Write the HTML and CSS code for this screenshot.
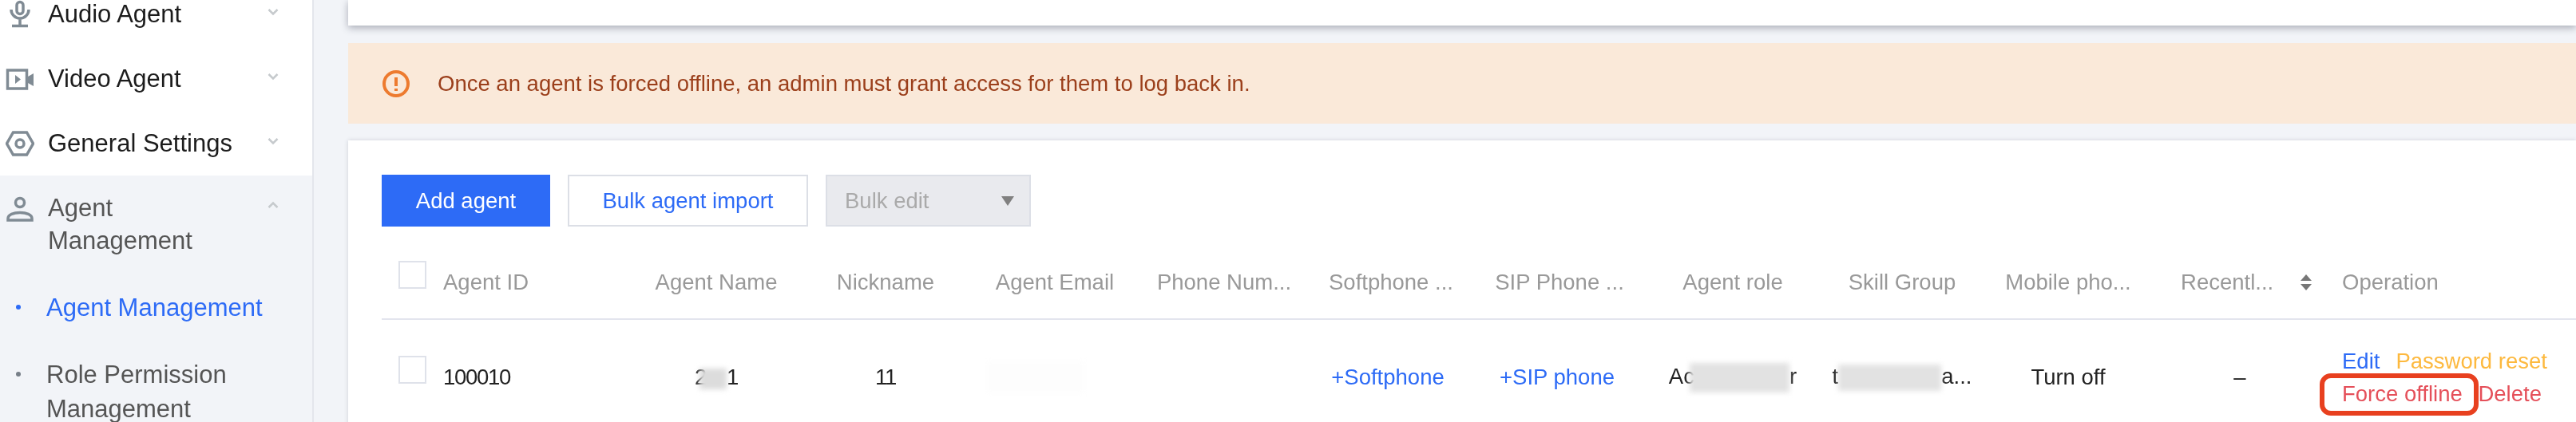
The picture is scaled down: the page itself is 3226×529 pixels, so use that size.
FILE: index.html
```html
<!DOCTYPE html>
<html lang="en">

<head>
   <meta charset="UTF-8">
   <meta name="viewport" content="width=device-width, initial-scale=1.0">
   <title>Agent Management</title>
   <link rel="stylesheet" href="styles.css">
</head>

<body>
   <aside class="sidebar">
      <div class="nav-item">
         <svg class="nav-icon" viewBox="0 0 36 36"><rect x="14" y="2.500" width="8" height="15" rx="4" /><path d="M7 12a11 11 0 0 0 22 0M18 23v9M8 32.500h20" /></svg>
         <span class="nav-label">Audio Agent</span>
         <svg class="chevron" viewBox="0 0 14 10"><path d="M1.500 2l5.500 5.500L12.500 2" /></svg>
      </div>
      <div class="nav-item">
         <svg class="nav-icon" viewBox="0 0 36 36"><rect x="2.500" y="7" width="24" height="23" /><path class="solid" d="M12 13l7 5.500-7 5.500zM28 15l7-4v16l-7-4z" /></svg>
         <span class="nav-label">Video Agent</span>
         <svg class="chevron" viewBox="0 0 14 10"><path d="M1.500 2l5.500 5.500L12.500 2" /></svg>
      </div>
      <div class="nav-item">
         <svg class="nav-icon" viewBox="0 0 36 36"><path d="M1.500 18L9.500 4h17l8 14-8 14h-17z" /><circle cx="18" cy="18" r="5" /></svg>
         <span class="nav-label">General Settings</span>
         <svg class="chevron" viewBox="0 0 14 10"><path d="M1.500 2l5.500 5.500L12.500 2" /></svg>
      </div>

      <div class="nav-group">
         <div class="nav-item nav-item-open">
            <svg class="nav-icon" viewBox="0 0 36 36"><circle cx="18" cy="10" r="5.500" /><path d="M3 32v-2c0-5 7-7.500 15-7.500s15 2.500 15 7.500v2z" /></svg>
            <span class="nav-label">Agent Management</span>
            <svg class="chevron" viewBox="0 0 14 10"><path d="M1.500 8L7 2.500 12.500 8" /></svg>
         </div>
         <div class="sub-item sub-item-active">Agent Management</div>
         <div class="sub-item">Role Permission Management</div>
      </div>
   </aside>

   <main class="content">
      <div class="top-card"></div>

      <div class="alert">
         <svg class="alert-icon" viewBox="0 0 34 34"><circle cx="17" cy="17" r="15" /><path d="M17 9v11M17 23v3" /></svg>
         <span>Once an agent is forced offline, an admin must grant access for them to log back in.</span>
      </div>

      <section class="card">
         <div class="toolbar">
            <button class="btn btn-primary">Add agent</button>
            <button class="btn">Bulk agent import</button>
            <div class="select-disabled">Bulk edit<span class="select-arrow"></span></div>
         </div>

         <table class="agents">
            <colgroup>
               <col class="col-id">
               <col class="col-212">
               <col class="col-212">
               <col class="col-212">
               <col class="col-212">
               <col class="col-soft">
               <col class="col-sip">
               <col class="col-role">
               <col class="col-skill">
               <col class="col-mobile">
               <col class="col-recent">
               <col>
            </colgroup>
            <thead>
               <tr>
                  <th class="cell-left"><div class="id-cell"><span class="checkbox"></span>Agent ID</div></th>
                  <th>Agent Name</th>
                  <th>Nickname</th>
                  <th>Agent Email</th>
                  <th>Phone Num...</th>
                  <th>Softphone ...</th>
                  <th>SIP Phone ...</th>
                  <th>Agent role</th>
                  <th>Skill Group</th>
                  <th>Mobile pho...</th>
                  <th class="cell-recent">Recentl...
                     <svg class="sort-icon" viewBox="0 0 18 20"><path d="M9 0l7 8H2zM9 20l-7-8h14z" /></svg>
                  </th>
                  <th class="cell-op">Operation</th>
               </tr>
            </thead>
            <tbody>
               <tr>
                  <td class="cell-left"><div class="id-cell"><span class="checkbox"></span><span class="digits">100010</span></div></td>
                  <td class="digits">2<span class="mask mask-name"></span>1</td>
                  <td class="digits">11</td>
                  <td><span class="mask mask-email"></span></td>
                  <td></td>
                  <td class="cell-soft"><a class="link">+Softphone</a></td>
                  <td class="cell-sip"><a class="link">+SIP phone</a></td>
                  <td>Ac<span class="mask mask-role"></span>r</td>
                  <td>t<span class="mask mask-skill"></span>a...</td>
                  <td>Turn off</td>
                  <td class="cell-dash">–</td>
                  <td class="cell-op">
                     <div class="op-line"><a class="link">Edit</a><a class="op-warn">Password reset</a></div>
                     <div class="op-line">
                        <span class="op-force"><a class="op-danger">Force offline</a><span class="highlight"></span></span>
                        <a class="op-danger">Delete</a>
                     </div>
                  </td>
               </tr>
            </tbody>
         </table>
      </section>
   </main>
</body>

</html>
```

FILE: styles.css
```css
html, body {
   margin: 0;
   height: 100%;
   overflow: hidden;
}

body {
   display: flex;
   font-family: "Liberation Sans", Arial, sans-serif;
   background-color: #f2f4f8;
   color: #222;
}

/* Sidebar */
.sidebar {
   flex: 0 0 391px;
   margin-top: -23px;
   background-color: #fff;
   border-right: 2px solid #e4e6ec;
   font-size: 31px;
   color: #1c1c1c;
   filter: blur(0.5px);
}

.nav-item {
   display: flex;
   align-items: center;
   height: 81px;
   padding: 0 42px 0 7px;
}

.nav-label {
   margin-left: 17px;
   max-width: 250px;
   line-height: 41px;
}

.nav-icon {
   flex: none;
   width: 36px;
   height: 36px;
   fill: none;
   stroke: #808b94;
   stroke-width: 3.500;
}

.nav-icon .solid {
   fill: #808b94;
   stroke: none;
}

.chevron {
   flex: none;
   width: 14px;
   height: 10px;
   margin: -6px 0 0 auto;
   fill: none;
   stroke: #c6cacd;
   stroke-width: 2.500;
}

.nav-group {
   background-color: #f2f4f8;
   height: 400px;
   color: #555;
}

.nav-item-open {
   height: 122px;
   align-items: flex-start;
   padding-top: 20px;
   box-sizing: border-box;
}

.nav-item-open .nav-icon {
   margin-top: 4px;
}

.nav-item-open .chevron {
   margin-top: 12px;
}

.sub-item {
   position: relative;
   max-width: 270px;
   margin: 0 0 22px 58px;
   line-height: 43px;
}

.sub-item::before {
   content: "";
   position: absolute;
   left: -38px;
   top: 18px;
   width: 6px;
   height: 6px;
   border-radius: 50%;
   background-color: #777f88;
}

.sub-item-active {
   max-width: none;
   margin-top: 22px;
   margin-bottom: 41px;
   color: #2d6bf6;
}

.sub-item-active::before {
   background-color: #2d6bf6;
}

/* Main area */
.content {
   flex: 1;
   min-width: 0;
   padding-left: 43px;
   filter: blur(0.5px);
}

.top-card {
   height: 32px;
   background-color: #fff;
   box-shadow: 0 3px 10px rgba(60, 65, 85, 0.4);
}

.alert {
   display: flex;
   align-items: center;
   height: 101px;
   margin-top: 22px;
   padding-left: 43px;
   background-color: #fae9d9;
   color: #9b3f1b;
   font-size: 27.500px;
}

.alert-icon {
   width: 34px;
   height: 34px;
   margin-right: 35px;
   fill: none;
   stroke: #ed7b2f;
   stroke-width: 4;
}

.card {
   height: 400px;
   margin-top: 21px;
   padding: 43px 0 0 42px;
   background-color: #fff;
   box-shadow: 0 0 5px rgba(60, 65, 85, 0.2);
}

.toolbar {
   display: flex;
   gap: 22px;
}

.btn {
   height: 65px;
   padding: 0;
   width: 301px;
   border: 2px solid #dcdfe6;
   background-color: #fff;
   color: #2d6bf6;
   font-family: inherit;
   font-size: 27.500px;
}

.btn-primary {
   width: 211px;
   border-color: #2d6bf6;
   background-color: #2d6bf6;
   color: #fff;
}

.select-disabled {
   display: flex;
   align-items: center;
   justify-content: space-between;
   box-sizing: border-box;
   width: 257px;
   height: 65px;
   padding: 0 19px 0 22px;
   border: 2px solid #dcdfe6;
   background-color: #e9eaee;
   color: #aaa;
   font-size: 27.500px;
}

.select-arrow {
   width: 0;
   height: 0;
   border-left: 8px solid transparent;
   border-right: 8px solid transparent;
   border-top: 12px solid #808080;
}

/* Table */
.agents {
   width: 100%;
   table-layout: fixed;
   border-collapse: collapse;
   font-size: 27.500px;
}

.col-id { width: 313px; }
.col-212 { width: 212px; }
.col-soft { width: 206px; }
.col-sip { width: 216px; }
.col-role { width: 218px; }
.col-skill { width: 206px; }
.col-mobile { width: 210px; }
.col-recent { width: 238px; }

.agents th {
   height: 116px;
   padding: 25px 0 0;
   box-sizing: border-box;
   border-bottom: 2px solid #e3e5ee;
   color: #999;
   font-weight: 400;
   white-space: nowrap;
}

.agents td {
   padding: 31px 0 0;
   text-align: center;
   vertical-align: middle;
   white-space: nowrap;
}

.agents .cell-left {
   padding-left: 21px;
   text-align: left;
}

.agents .cell-op {
   text-align: left;
}

.agents .cell-soft {
   padding-right: 8px;
}

.agents .cell-sip {
   padding-right: 6px;
}

.agents .cell-dash {
   padding-right: 18px;
}

.id-cell {
   display: flex;
   align-items: center;
}

.checkbox {
   flex: none;
   box-sizing: border-box;
   width: 35px;
   height: 35px;
   margin: 0 21px 20px 0;
   border: 2px solid #dfe2ea;
   background-color: #fff;
}

.digits {
   letter-spacing: -1.300px;
}

.link {
   color: #2d6bf6;
}

.op-line {
   line-height: 41px;
}

.op-warn {
   margin-left: 20px;
   color: #fdb93f;
}

.op-danger {
   color: #e5505a;
}

.op-force {
   position: relative;
   margin-right: 12px;
}

.highlight {
   position: absolute;
   left: -28px;
   right: -20px;
   top: -10px;
   bottom: -12px;
   border: 6px solid #e8401f;
   border-radius: 14px;
}

.sort-icon {
   width: 18px;
   height: 20px;
   margin-left: 24px;
   fill: #777;
   vertical-align: -1px;
}

/* Blurred-out values */
.mask {
   display: inline-block;
   vertical-align: middle;
   background-color: #dcdcdc;
   filter: blur(3px);
}

.mask-name {
   width: 34px;
   height: 26px;
   margin-left: -8px;
}

.mask-email {
   width: 122px;
   height: 40px;
   margin-right: 48px;
   background-color: #fdfdfd;
}

.mask-role {
   width: 125px;
   height: 37px;
   margin-left: -6px;
   background-color: #e2e2e2;
}

.mask-skill {
   width: 129px;
   height: 33px;
   background-color: #e2e2e2;
}
```
